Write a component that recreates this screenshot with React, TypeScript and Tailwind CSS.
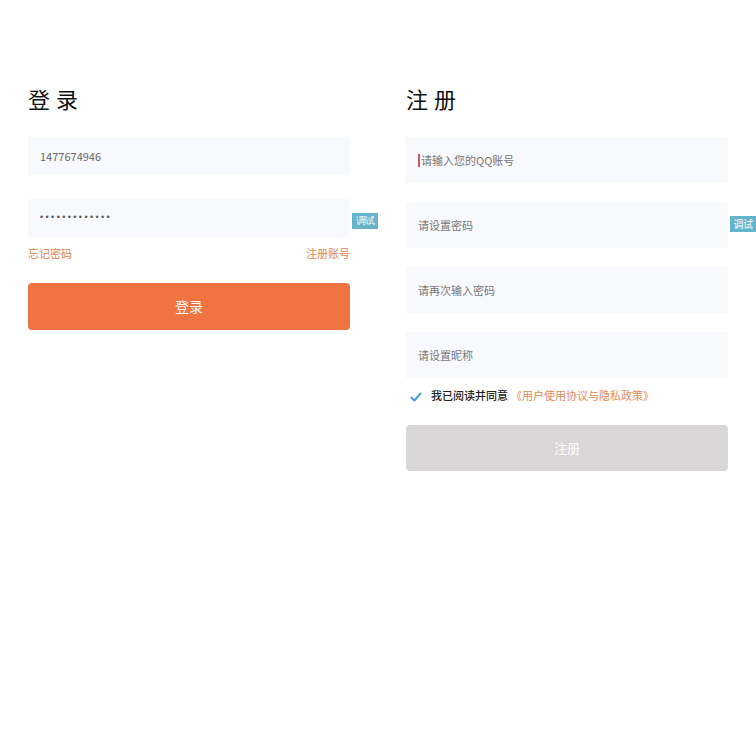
import React from "react";

const font = { fontFamily: '"Noto Sans CJK SC", "Noto Sans", sans-serif' };

function Badge() {
  return (
    <div className="absolute left-[calc(100%+2px)] top-[14px] w-[26px] h-[16px] bg-[#66b3cc] text-white text-[10px] leading-[16px] text-center tracking-[-0.5px]">
      调试
    </div>
  );
}

export default function App() {
  return (
    <div className="w-[756px] h-[756px] bg-white flex text-[#333]" style={font}>
      {/* Login */}
      <div className="w-[378px] pl-[28px] pr-[28px] pt-[83px] flex flex-col">
        <div className="h-[30px] text-[22px] leading-[30px] tracking-[0.5px] text-[#111]">登 录</div>
        <div className="mt-[24px] h-[38px] bg-[#f7f9fd] flex items-center px-[12px] text-[11px] text-[#666]">
          1477674946
        </div>
        <div
          className="relative mt-[24px] h-[38px] bg-[#f7f9fd] flex items-center px-[12px] text-[9px] text-[#555] tracking-[2.4px]"
          style={{ fontFamily: '"Liberation Sans", Arial, sans-serif' }}
        >
          •••••••••••••
          <Badge />
        </div>
        <div className="mt-[8px] h-[16px] flex justify-between items-center text-[11px] leading-[16px] text-[#d98552]">
          <span>忘记密码</span>
          <span>注册账号</span>
        </div>
        <div className="mt-[22px] h-[47px] rounded-[4px] bg-[#f07442] text-white text-[14px] flex items-center justify-center">
          登录
        </div>
      </div>
      {/* Register */}
      <div className="w-[378px] pl-[28px] pr-[28px] pt-[83px] flex flex-col">
        <div className="h-[30px] text-[22px] leading-[30px] tracking-[0.5px] text-[#111]">注 册</div>
        <div className="mt-[24px] h-[46px] bg-[#f7f9fd] flex items-center px-[12px] text-[11px] text-[#777]">
          <span className="inline-block w-[2px] h-[13px] bg-[#d0506e] mr-[1px]"></span>
          请输入您的QQ账号
        </div>
        <div className="relative mt-[19px] h-[46px] bg-[#f7f9fd] flex items-center px-[12px] text-[11px] text-[#777]">
          请设置密码
          <Badge />
        </div>
        <div className="mt-[19px] h-[46px] bg-[#f7f9fd] flex items-center px-[12px] text-[11px] text-[#777]">
          请再次输入密码
        </div>
        <div className="mt-[19px] h-[46px] bg-[#f7f9fd] flex items-center px-[12px] text-[11px] text-[#777]">
          请设置昵称
        </div>
        <div className="mt-[7px] h-[20px] flex items-center text-[11px] leading-[20px]">
          <svg width="12" height="12" viewBox="0 0 12 12" className="ml-[4px] mr-[9px] mt-[3px]">
            <path d="M1.5 6.5 L4.5 9.5 L10.5 2.5" fill="none" stroke="#4a9fd0" strokeWidth="2" strokeLinecap="round" strokeLinejoin="round" />
          </svg>
          <span className="text-[#222] font-medium mr-[3px]">我已阅读并同意</span>
          <span className="text-[#e08a55]">《用户使用协议与隐私政策》</span>
        </div>
        <div className="mt-[20px] h-[46px] rounded-[4px] bg-[#d9d6d8] text-white text-[13px] flex items-center justify-center">
          注册
        </div>
      </div>
    </div>
  );
}
